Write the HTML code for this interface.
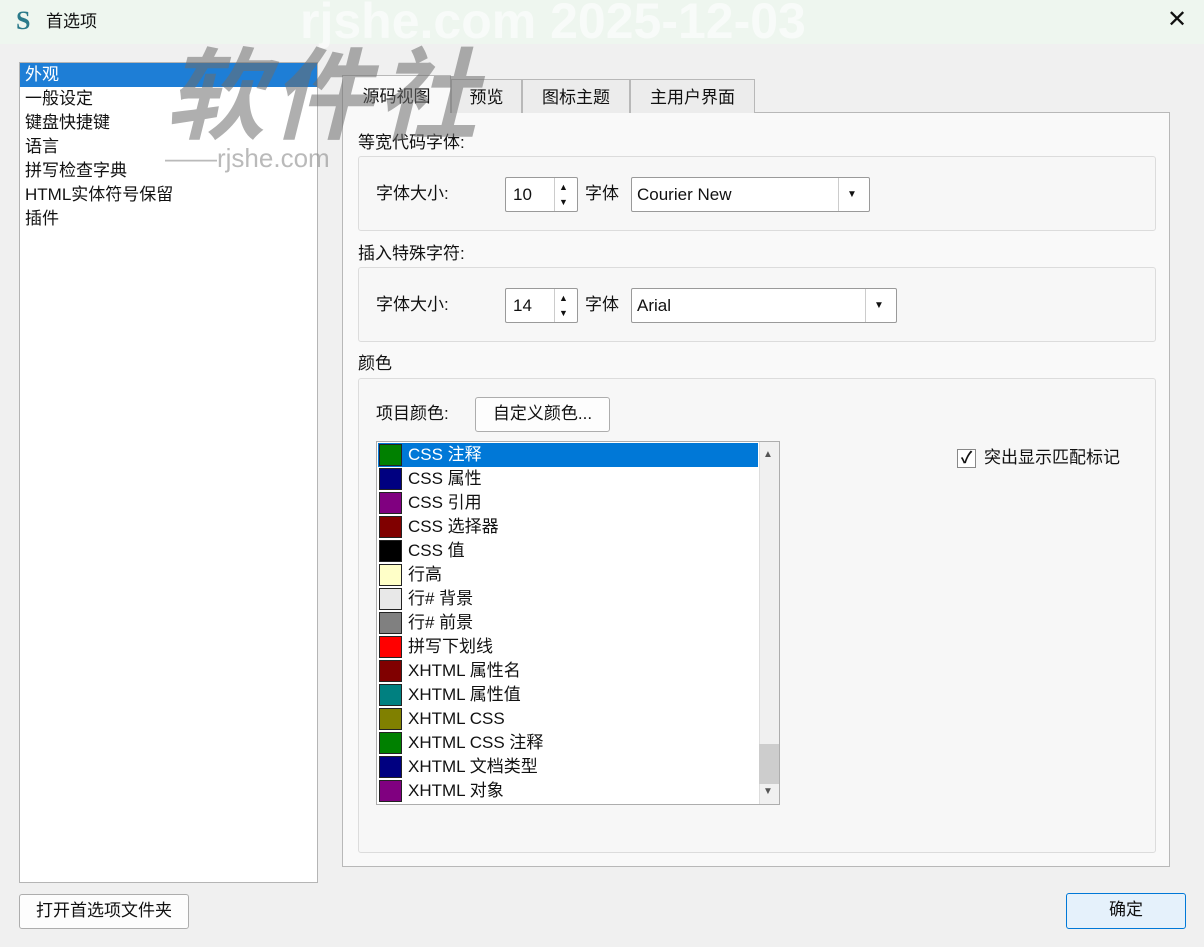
<!DOCTYPE html>
<html><head><meta charset="utf-8"><style>
*{box-sizing:border-box;margin:0;padding:0}
body{width:1204px;height:947px;background:#f0f0f0;font-family:"Liberation Sans","Noto Sans CJK SC",sans-serif;font-size:17px;color:#111;position:relative;overflow:hidden}
.a{position:absolute}
.t{position:absolute;white-space:nowrap;line-height:24px}
.btn{position:absolute;background:#fdfdfd;border:1px solid #adadad;border-radius:3px;text-align:center;line-height:32px}
.grp{position:absolute;border:1px solid #dcdcdc;border-radius:3px;background:#f7f7f7}
.spin{position:absolute;background:#fff;border:1px solid #9a9a9a;border-radius:2px}
.combo{position:absolute;background:#fff;border:1px solid #9a9a9a;border-radius:2px}
.tab{position:absolute;top:79px;height:34px;border:1px solid #b8b8b8;border-bottom:none;background:#ececec;text-align:center;line-height:36px}
.row{position:absolute;left:1px;width:380px;height:24px;line-height:24px}
.sw{position:absolute;left:1px;top:1px;width:23px;height:22px;border:1px solid #222}
.row span{position:absolute;left:30px}
</style></head><body>
<div class="a" style="left:0;top:0;width:1204px;height:44px;background:#eef6ef"></div>
<div class="t" style="left:16px;top:9px;font-family:'Liberation Serif',serif;font-size:26px;color:#2a7a8a;font-weight:bold">S</div>
<div class="t" style="left:46px;top:10px">首选项</div>
<div class="t" style="left:1167px;top:8px;font-size:24px">✕</div>
<div class="t" style="left:300px;top:-4px;font-size:50px;font-weight:bold;color:rgba(255,255,255,0.6);line-height:50px">rjshe.com 2025-12-03</div>

<div class="a" style="left:19px;top:62px;width:299px;height:821px;background:#fff;border:1px solid #b5b5b5"></div>
<div class="a" style="left:20px;top:63px;width:297px;height:24px;background:#1e7ed6"></div>
<div class="t" style="left:25px;top:63px;color:#fff">外观</div>
<div class="t" style="left:25px;top:87px">一般设定</div>
<div class="t" style="left:25px;top:111px">键盘快捷键</div>
<div class="t" style="left:25px;top:135px">语言</div>
<div class="t" style="left:25px;top:159px">拼写检查字典</div>
<div class="t" style="left:25px;top:183px">HTML实体符号保留</div>
<div class="t" style="left:25px;top:207px">插件</div>

<div class="a" style="left:342px;top:112px;width:828px;height:755px;background:#f9f9f9;border:1px solid #b8b8b8"></div>
<div class="tab" style="left:342px;top:75px;width:109px;height:38px;background:#f9f9f9;line-height:42px">源码视图</div>
<div class="tab" style="left:451px;width:71px">预览</div>
<div class="tab" style="left:522px;width:108px">图标主题</div>
<div class="tab" style="left:630px;width:125px">主用户界面</div>

<div class="t" style="left:358px;top:131px">等宽代码字体:</div>
<div class="grp" style="left:358px;top:156px;width:798px;height:75px"></div>
<div class="t" style="left:376px;top:182px">字体大小:</div>
<div class="spin" style="left:505px;top:177px;width:73px;height:35px"><div class="t" style="left:7px;top:5px">10</div><div class="a" style="left:48px;top:0;width:1px;height:33px;background:#ccc"></div><div class="t" style="left:53px;top:-3px;font-size:9px">▲</div><div class="t" style="left:53px;top:12px;font-size:9px">▼</div></div>
<div class="t" style="left:585px;top:182px">字体</div>
<div class="combo" style="left:631px;top:177px;width:239px;height:35px"><div class="t" style="left:5px;top:5px">Courier New</div><div class="a" style="left:206px;top:0;width:1px;height:33px;background:#ccc"></div><div class="t" style="left:215px;top:5px;font-size:10px">▼</div></div>

<div class="t" style="left:358px;top:242px">插入特殊字符:</div>
<div class="grp" style="left:358px;top:267px;width:798px;height:75px"></div>
<div class="t" style="left:376px;top:293px">字体大小:</div>
<div class="spin" style="left:505px;top:288px;width:73px;height:35px"><div class="t" style="left:7px;top:5px">14</div><div class="a" style="left:48px;top:0;width:1px;height:33px;background:#ccc"></div><div class="t" style="left:53px;top:-3px;font-size:9px">▲</div><div class="t" style="left:53px;top:12px;font-size:9px">▼</div></div>
<div class="t" style="left:585px;top:293px">字体</div>
<div class="combo" style="left:631px;top:288px;width:266px;height:35px"><div class="t" style="left:5px;top:5px">Arial</div><div class="a" style="left:233px;top:0;width:1px;height:33px;background:#ccc"></div><div class="t" style="left:242px;top:5px;font-size:10px">▼</div></div>

<div class="t" style="left:358px;top:352px">颜色</div>
<div class="grp" style="left:358px;top:378px;width:798px;height:475px"></div>
<div class="t" style="left:376px;top:402px">项目颜色:</div>
<div class="btn" style="left:475px;top:397px;width:135px;height:35px">自定义颜色...</div>

<div class="a" style="left:376px;top:441px;width:404px;height:364px;background:#fff;border:1px solid #adadad;overflow:hidden">
<div class="row" style="top:1px;width:380px;background:#0078d7;color:#fff"><div class="sw" style="background:#008000"></div><span>CSS 注释</span></div>
<div class="row" style="top:25px"><div class="sw" style="background:#000080"></div><span>CSS 属性</span></div>
<div class="row" style="top:49px"><div class="sw" style="background:#800080"></div><span>CSS 引用</span></div>
<div class="row" style="top:73px"><div class="sw" style="background:#800000"></div><span>CSS 选择器</span></div>
<div class="row" style="top:97px"><div class="sw" style="background:#000"></div><span>CSS 值</span></div>
<div class="row" style="top:121px"><div class="sw" style="background:#ffffc8"></div><span>行高</span></div>
<div class="row" style="top:145px"><div class="sw" style="background:#e8e8e8"></div><span>行# 背景</span></div>
<div class="row" style="top:169px"><div class="sw" style="background:#808080"></div><span>行# 前景</span></div>
<div class="row" style="top:193px"><div class="sw" style="background:#ff0000"></div><span>拼写下划线</span></div>
<div class="row" style="top:217px"><div class="sw" style="background:#800000"></div><span>XHTML 属性名</span></div>
<div class="row" style="top:241px"><div class="sw" style="background:#008080"></div><span>XHTML 属性值</span></div>
<div class="row" style="top:265px"><div class="sw" style="background:#808000"></div><span>XHTML CSS</span></div>
<div class="row" style="top:289px"><div class="sw" style="background:#008000"></div><span>XHTML CSS 注释</span></div>
<div class="row" style="top:313px"><div class="sw" style="background:#000080"></div><span>XHTML 文档类型</span></div>
<div class="row" style="top:337px"><div class="sw" style="background:#800080"></div><span>XHTML 对象</span></div>
<div class="a" style="left:382px;top:0;width:20px;height:362px;background:#f0f0f0;border-left:1px solid #ddd"></div>
<div class="a" style="left:382px;top:302px;width:20px;height:40px;background:#cdcdcd"></div>
<div class="t" style="left:386px;top:1px;font-size:10px;color:#555">▲</div>
<div class="t" style="left:386px;top:338px;font-size:10px;color:#555">▼</div>
</div>

<div class="a" style="left:957px;top:449px;width:19px;height:19px;background:#fff;border:1px solid #888;text-align:center;font-size:16px;line-height:18px;font-weight:bold">✓</div>
<div class="t" style="left:984px;top:446px">突出显示匹配标记</div>

<div class="btn" style="left:19px;top:894px;width:170px;height:35px">打开首选项文件夹</div>
<div class="btn" style="left:1066px;top:893px;width:120px;height:36px;border:1px solid #0078d7;background:#e5f1fb">确定</div>

<div class="t" style="left:165px;top:42px;font-size:100px;font-weight:bold;font-style:italic;color:rgba(110,110,110,0.55);line-height:110px;letter-spacing:6px">软件社</div>
<div class="t" style="left:165px;top:146px;font-size:26px;color:rgba(140,140,140,0.6)">——rjshe.com</div>
</body></html>
